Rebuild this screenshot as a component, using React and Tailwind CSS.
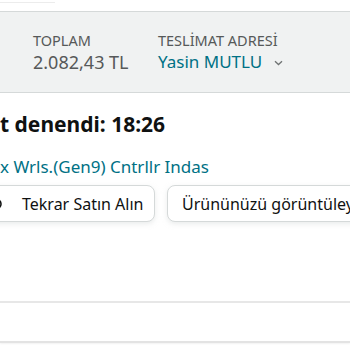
import React from "react";

export default function App() {
  return (
    <div
      className="w-[350px] h-[350px] overflow-hidden bg-white relative"
      style={{ fontFamily: "'Noto Sans', 'Open Sans', sans-serif" }}
    >
      <div className="h-[11px] bg-white">
        <div className="w-[55px] h-[3px] border-b border-[#ececec]"></div>
      </div>
      <div className="h-[82px] bg-[#f0f2f2] border-t border-b border-[#d5d9d9] flex pt-[18px] pl-[33px]">
        <div className="w-[125px] flex flex-col">
          <div className="text-[14.5px] leading-[20px] text-[#565959]">TOPLAM</div>
          <div className="text-[18px] leading-[24px] text-[#565959]">2.082,43 TL</div>
        </div>
        <div className="flex flex-col">
          <div className="text-[14.5px] leading-[20px] text-[#565959]">TESLİMAT ADRESİ</div>
          <div className="flex items-center text-[17px] leading-[24px] text-[#007185]">
            Yasin MUTLU
            <svg width="9" height="6" viewBox="0 0 9 6" className="ml-[12px] mt-[2px]">
              <path d="M1 1.2 L4.5 4.5 L8 1.2" fill="none" stroke="#6f7373" strokeWidth="1.3" />
            </svg>
          </div>
        </div>
      </div>
      <div className="pt-[17px]">
        <div className="text-[21px] leading-[28px] font-bold text-[#0f1111] whitespace-nowrap">t denendi: 18:26</div>
        <div className="mt-[17px] text-[17px] leading-[24px] text-[#007185] whitespace-nowrap">x Wrls.(Gen9) Cntrllr Indas</div>
        <div className="mt-[6px] flex gap-[12px] ml-[-20px] whitespace-nowrap">
          <div className="h-[37px] w-[175px] shrink-0 flex items-center pl-[6px] rounded-[8px] border border-[#d5d9d9] shadow-[0_2px_5px_rgba(213,217,217,0.5)] bg-white">
            <svg width="18" height="18" viewBox="0 0 18 18" className="shrink-0">
              <path d="M4 9a5 5 0 1 0 5-5H6" fill="none" stroke="#0f1111" strokeWidth="1.6" />
              <path d="M7.5 2 L5 4 L7.5 6" fill="none" stroke="#0f1111" strokeWidth="1.6" />
            </svg>
            <span className="ml-[17px] text-[16px] text-[#0f1111]">Tekrar Satın Alın</span>
          </div>
          <div className="h-[37px] shrink-0 flex items-center px-[14px] rounded-[8px] border border-[#d5d9d9] shadow-[0_2px_5px_rgba(213,217,217,0.5)] bg-white">
            <span className="text-[16px] text-[#0f1111]">Ürününüzü görüntüleyin</span>
          </div>
        </div>
      </div>
      <div className="mt-[79px] border-t-2 border-[#e7e7e7]"></div>
      <div className="mt-[38px] border-t-2 border-[#e3e3e3] shadow-[0_1px_2px_rgba(0,0,0,0.06)]"></div>
    </div>
  );
}
